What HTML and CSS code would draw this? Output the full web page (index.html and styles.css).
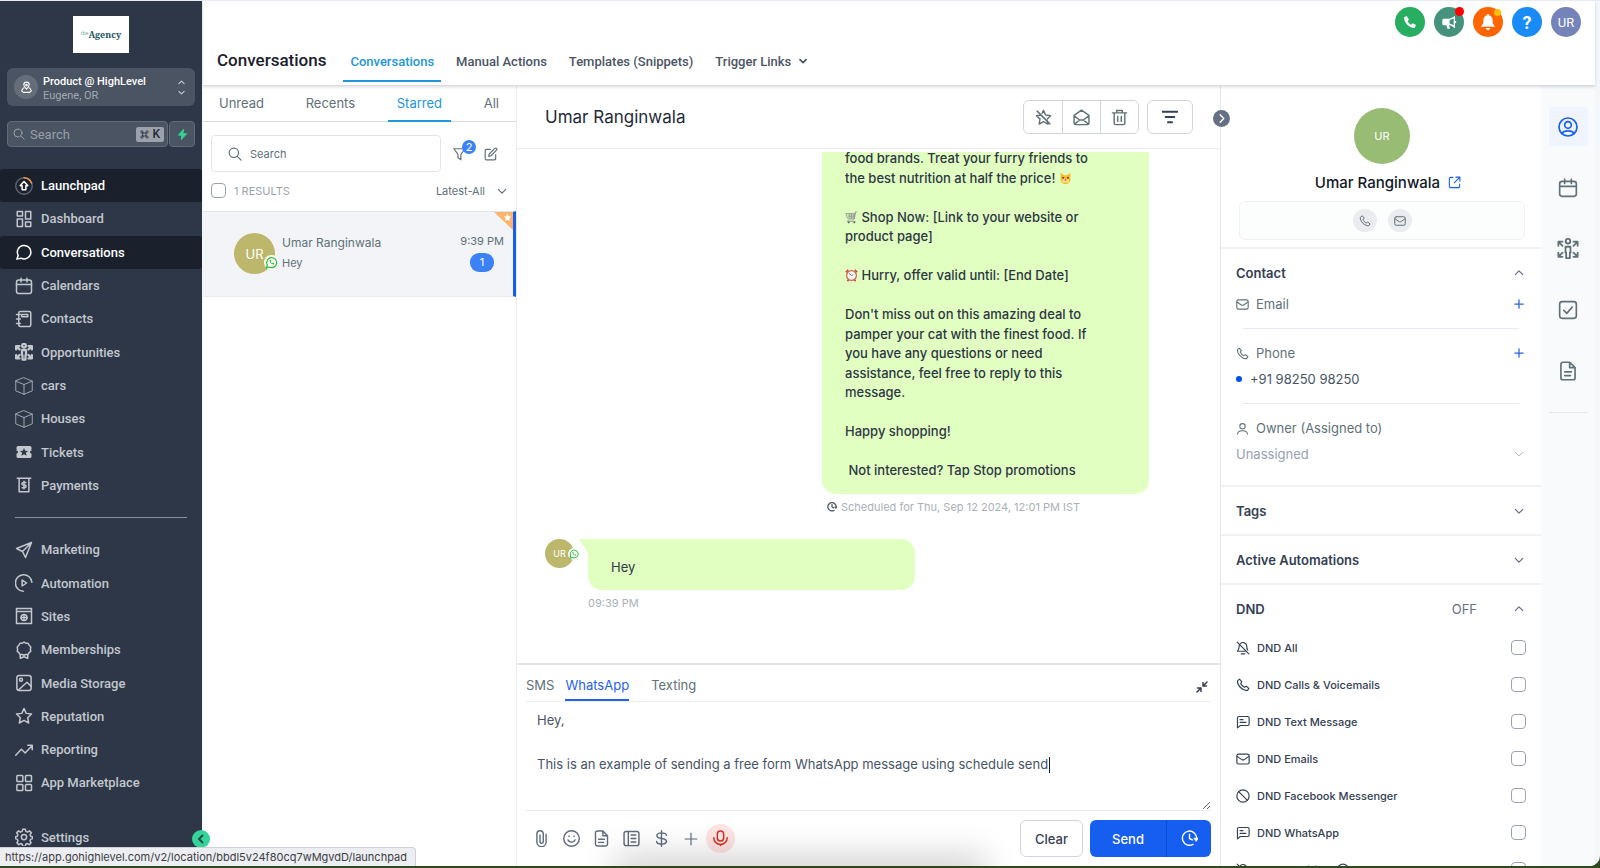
FILE: index.html
```
<!DOCTYPE html>
<html lang="en">
<head>
    <meta charset="UTF-8">
    <title>Conversations</title>
    <link rel="stylesheet" href="styles.css">
</head>
<body>
<svg class="sprite" aria-hidden="true">
    <symbol id="i-pin" viewBox="0 0 24 24"><path d="M12 15c3-3 5-5.500 5-8a5 5 0 0 0-10 0c0 2.500 2 5 5 8z"/><circle cx="12" cy="7.500" r="1.500"/><path d="M7 13H6l-3 5 3 3h12l3-3-3-5h-1"/></symbol>
    <symbol id="i-search" viewBox="0 0 24 24"><circle cx="10" cy="10" r="8"/><path d="m16 16 6.500 6.500"/></symbol>
    <symbol id="i-bolt" viewBox="0 0 24 24"><path d="M14 1 3 13.500h7.500L9.500 23 21 10.500h-7.500z"/></symbol>
    <symbol id="i-up" viewBox="0 0 24 24"><path d="m3 16 9-9 9 9"/></symbol>
    <symbol id="i-down" viewBox="0 0 24 24"><path d="m3 8 9 9 9-9"/></symbol>
    <symbol id="i-left" viewBox="0 0 24 24"><path d="m15 5-7 7 7 7"/></symbol>
    <symbol id="i-right" viewBox="0 0 24 24"><path d="m9 4 8 8-8 8"/></symbol>
    <symbol id="i-launch" viewBox="0 0 24 24"><circle cx="12" cy="12" r="11" stroke="#5b6472"/><path d="M12 1a11 11 0 0 1 10 7" stroke="#f2994a"/><path d="m12 6 5 5.500h-2.500V17h-5v-5.500H7z"/></symbol>
    <symbol id="i-dash" viewBox="0 0 24 24"><path d="M3 2h7v6H3zM14 2h7v10h-7zM3 12h7v10H3zM14 16h7v6h-7z"/></symbol>
    <symbol id="i-chat" viewBox="0 0 24 24"><path d="M2.500 21.500 4.300 16.600A9 9 0 1 1 8 20.200z"/></symbol>
    <symbol id="i-cal" viewBox="0 0 24 24"><rect x="2" y="4" width="20" height="18" rx="3"/><path d="M2 10h20M8 1.500v5M16 1.500v5"/></symbol>
    <symbol id="i-book" viewBox="0 0 24 24"><rect x="5" y="2" width="16" height="20" rx="2"/><path d="M9 6h8v3H9zM2 6h5M2 12h5M2 18h5"/></symbol>
    <symbol id="i-opp" viewBox="0 0 24 24"><circle cx="12" cy="3.500" r="2.500"/><path d="M9.300 9.500h5.400v6.500H14v6h-4v-6h-.700zM1.500 8.500V4H6M2 4.500l4 4M22.500 8.500V4H18M22 4.500l-4 4M1.500 16v4.500H6M2 20l4-4M22.500 16v4.500H18M22 20l-4-4"/></symbol>
    <symbol id="i-box" viewBox="0 0 24 24"><path d="M12 1 23 5.500v13L12 23 1 18.500v-13zM1 5.500 12 10l11-4.500M12 10v13"/></symbol>
    <symbol id="i-ticket" viewBox="0 0 24 24"><path fill="currentColor" stroke="none" fill-rule="evenodd" d="M4 4h16a2 2 0 0 1 2 2v4a2 2 0 0 0 0 4v4a2 2 0 0 1-2 2H4a2 2 0 0 1-2-2v-4a2 2 0 0 0 0-4V6a2 2 0 0 1 2-2zm8 2.500-1.500 3.700-4 .3 3 2.600-.900 3.900 3.400-2.100 3.400 2.100-.900-3.900 3-2.600-4-.3z"/></symbol>
    <symbol id="i-pay" viewBox="0 0 24 24"><path d="M3 3h18M5.500 3v18h13V3M14.500 8.500h-3.500a1.700 1.700 0 0 0 0 3.500h2a1.700 1.700 0 0 1 0 3.500H9.500M12 7v10"/></symbol>
    <symbol id="i-send" viewBox="0 0 24 24"><path d="M22 2 2 10l8 4 4 8zM22 2 10 14"/></symbol>
    <symbol id="i-auto" viewBox="0 0 24 24"><path d="M11 23A11 11 0 1 1 22.500 11M9.500 8v8l6-4z"/></symbol>
    <symbol id="i-site" viewBox="0 0 24 24"><path d="M2 2h20v20H2zM2 6h20"/><circle cx="12" cy="14" r="4"/><path d="M8 14h8M12 10v8"/></symbol>
    <symbol id="i-badge" viewBox="0 0 24 24"><path d="m12 1.500 2.500 1.400 2.900.1 1.400 2.500L21 8l-.400 2.800.400 2.800-2.200 1.900L17.400 18h-2.900L12 19l-2.500-1H6.600l-1.400-2.500L3 13.600l.400-2.800L3 8l2.200-2.500L6.600 3l2.900-.1zM7 18v5l5-2 5 2v-5"/></symbol>
    <symbol id="i-image" viewBox="0 0 24 24"><rect x="2.500" y="2" width="19" height="20" rx="3"/><circle cx="8" cy="7.500" r="2"/><path d="m5 21 11-10 5.500 5.500"/></symbol>
    <symbol id="i-star" viewBox="0 0 24 24"><path d="m12 2 3 6.500 7 .900-5.100 4.900 1.300 7L12 17.900l-6.200 3.400 1.300-7L2 9.400l7-.900z"/></symbol>
    <symbol id="i-trend" viewBox="0 0 24 24"><path d="m1 19 7.500-8 5 5L23 6M17 5.500h6v6"/></symbol>
    <symbol id="i-grid" viewBox="0 0 24 24"><rect x="2.500" y="2" width="8" height="8" rx="1"/><rect x="14" y="2" width="8" height="8" rx="1"/><rect x="2.500" y="14" width="8" height="8" rx="1"/><rect x="14" y="14" width="8" height="8" rx="1"/></symbol>
    <symbol id="i-gear" viewBox="0 0 24 24"><circle cx="12" cy="12" r="3.500"/><path d="M10.200 1.500h3.600l.6 3 2.300 1 2.600-1.700 2.500 2.500-1.700 2.600 1 2.300 2.400.6v2.400l-2.700 1-.8 2 1.500 2.500-2.500 2.500-2.500-1.500-2.200.9-.7 2.900h-3.200l-.7-2.900-2.200-.9-2.500 1.500-2.500-2.500 1.500-2.500-.8-2-2.700-1v-2.400l2.400-.6 1-2.300-1.700-2.600 2.500-2.500 2.600 1.700 2.300-1z"/></symbol>
    <symbol id="i-funnel" viewBox="0 0 24 24"><path d="M1.500 3h19l-7 9.500V22l-5-3.500v-6z"/></symbol>
    <symbol id="i-edit" viewBox="0 0 24 24"><path d="M11 4H4a2 2 0 0 0-2 2v14a2 2 0 0 0 2 2h14a2 2 0 0 0 2-2v-7M18.500 2.500a2.100 2.100 0 0 1 3 3L12 15l-4 1 1-4z"/></symbol>
    <symbol id="i-wa" viewBox="0 0 24 24"><circle cx="12" cy="12" r="12" fill="#fff" stroke="none"/><path d="M4 20.500 5.300 16A8 8 0 1 1 8.500 19.200z" stroke="#25c22b" stroke-width="2"/><path d="M9 8c-1 3.500 3.500 8 7 7l.3-1.700-2.300-1-1 1c-1.200-.5-2-1.300-2.500-2.500l1-1-.9-2.200z" fill="#25c22b" stroke="none"/></symbol>
    <symbol id="i-unstar" viewBox="0 0 24 24"><path d="m8.500 8.500-6.500.9 5.100 4.900-1.300 7L12 17.900l6.200 3.400-1-5.300M10 6l2-4 3 6.500 7 .9-4.500 4.300M3 3l18 18"/></symbol>
    <symbol id="i-open" viewBox="0 0 24 24"><path d="M1.500 9 12 1.500 22.500 9v11a2 2 0 0 1-2 2h-17a2 2 0 0 1-2-2zM2 10l7.500 5.500h5L22 10M2.500 21l7-5.500M21.500 21l-7-5.500"/></symbol>
    <symbol id="i-trash" viewBox="0 0 24 24"><path d="M2 5.500h20M8 5V2h8v3M4.500 6v14a2 2 0 0 0 2 2h11a2 2 0 0 0 2-2V6M9.500 10.500v7M14.500 10.500v7"/></symbol>
    <symbol id="i-lines" viewBox="0 0 24 24"><path d="M1 4h22M5.500 12h13M9 20h6"/></symbol>
    <symbol id="i-later" viewBox="0 0 24 24"><path d="M17 20.200A10 10 0 1 1 22 12M12 6v6l4 2"/><path d="M18.500 11.500h6L21.500 16z" fill="currentColor" stroke-width="1"/></symbol>
    <symbol id="i-shrink" viewBox="0 0 24 24"><path d="M22 2 14.500 9.500M14 3v7h7M2 22l7.500-7.500M10 21v-7H3"/></symbol>
    <symbol id="i-clip" viewBox="0 0 24 24"><path d="M18.500 6v11a6.500 6.500 0 0 1-13 0V5.500a4.500 4.500 0 0 1 9 0v11a2.300 2.300 0 0 1-4.600 0V7"/></symbol>
    <symbol id="i-smile" viewBox="0 0 24 24"><circle cx="12" cy="12" r="11"/><path d="M7 14a5.500 5.500 0 0 0 10 0M8.500 8.500v.8M15.500 8.500v.8"/></symbol>
    <symbol id="i-doc" viewBox="0 0 24 24"><path d="M14 1.500H6A2.500 2.500 0 0 0 3.500 4v16A2.500 2.500 0 0 0 6 22.500h12a2.500 2.500 0 0 0 2.500-2.500V8zM14 1.500V8h6.500M8 13h8M8 17.500h7"/></symbol>
    <symbol id="i-page" viewBox="0 0 24 24"><rect x="1.500" y="2" width="21" height="20" rx="3"/><path d="M7.500 2v20M11.500 7h6.500M11.500 12h6.500M11.500 17h6.500"/></symbol>
    <symbol id="i-dollar" viewBox="0 0 24 24"><path d="M12 1v22M19 7.500C18.500 5 15.500 4 12 4 8 4 5.500 5.500 5.500 8s2.500 3.500 6.500 4 7 1.500 7 4-3 4-7 4-7-1.500-7-4"/></symbol>
    <symbol id="i-plus" viewBox="0 0 24 24"><path d="M12 2v20M2 12h20"/></symbol>
    <symbol id="i-mic" viewBox="0 0 24 24"><rect x="7.500" y="1.500" width="9" height="14" rx="4.500"/><path d="M2.500 11a9.500 9.500 0 0 0 19 0M12 20.500V22"/></symbol>
    <symbol id="i-phone" viewBox="0 0 24 24"><path d="M6 2 2.500 5C2 12.500 11 22 19.500 21.500l2.500-3.500-4.500-4-3 2c-3-1.200-5.500-4-6.500-6.500l2-3z"/></symbol>
    <symbol id="i-mail" viewBox="0 0 24 24"><rect x="1.500" y="3.500" width="21" height="17" rx="3"/><path d="m2 7.500 8.500 6h3L22 7.500"/></symbol>
    <symbol id="i-user" viewBox="0 0 24 24"><circle cx="12" cy="8" r="5"/><path d="M3 22c0-4.500 3.500-6 9-6s9 1.500 9 6"/></symbol>
    <symbol id="i-ext" viewBox="0 0 24 24"><path d="M9 2.500H5A2.500 2.500 0 0 0 2.500 5v14A2.500 2.500 0 0 0 5 21.500h14a2.500 2.500 0 0 0 2.500-2.500v-4M14.500 2h7.500v7.500M22 2 11.500 12.500"/></symbol>
    <symbol id="i-profile" viewBox="0 0 24 24"><circle cx="12" cy="12" r="10.800"/><circle cx="12" cy="9.500" r="4"/><path d="M5 20c1-2.500 3-3.300 7-3.300s6 .8 7 3.300"/></symbol>
    <symbol id="i-check" viewBox="0 0 24 24"><rect x="2" y="2" width="20" height="20" rx="3"/><path d="m7 12.500 3.500 3.500L17 8.500"/></symbol>
    <symbol id="i-belloff" viewBox="0 0 24 24"><path d="M7.500 4.500A6.500 6.500 0 0 1 18.500 9c0 3 .5 5 1.500 6.500M5.500 8c0 4-.5 6.500-3 9.500H17M9 22h6M2 2l20 20"/></symbol>
    <symbol id="i-msg" viewBox="0 0 24 24"><path d="M5 2.500h15A2.500 2.500 0 0 1 22.500 5v10.500A2.500 2.500 0 0 1 20 18H7.500L2.500 22V5A2.500 2.500 0 0 1 5 2.500zM7 8h5M7 12.500h10"/></symbol>
    <symbol id="i-ban" viewBox="0 0 24 24"><circle cx="12" cy="12" r="10.500"/><path d="m4.500 4.500 15 15"/></symbol>
    <symbol id="i-info" viewBox="0 0 24 24"><circle cx="12" cy="12" r="10"/><path d="M12 11v6M12 7v1"/></symbol>
</svg>
<div class="app">
    <aside class="sidebar">
        <a href="#" class="logo"><small>the</small>Agency</a>
        <button class="location">
            <span class="pin"><svg class="icon"><use href="#i-pin"/></svg></span>
            <span class="place"><b>Product @ HighLevel</b><span>Eugene, OR</span></span>
            <span class="updown"><svg class="icon"><use href="#i-up"/></svg><svg class="icon"><use href="#i-down"/></svg></span>
        </button>
        <div class="quick">
            <label class="quick-search">
                <svg class="icon"><use href="#i-search"/></svg>
                <input type="text" placeholder="Search" aria-label="Search the app">
                <kbd><svg class="icon" viewBox="0 0 24 24"><path d="M8 8h8v8H8zM8 8V5a3 3 0 1 0-3 3zM16 8h3a3 3 0 1 0-3-3zM8 16H5a3 3 0 1 0 3 3zM16 16v3a3 3 0 1 0 3-3z"/></svg>K</kbd>
            </label>
            <button class="bolt" aria-label="Quick actions"><svg class="icon"><use href="#i-bolt"/></svg></button>
        </div>
        <nav class="menu">
            <a href="#" class="active"><svg class="icon"><use href="#i-launch"/></svg>Launchpad</a>
            <a href="#"><svg class="icon"><use href="#i-dash"/></svg>Dashboard</a>
            <a href="#" class="active"><svg class="icon"><use href="#i-chat"/></svg>Conversations</a>
            <a href="#"><svg class="icon"><use href="#i-cal"/></svg>Calendars</a>
            <a href="#"><svg class="icon"><use href="#i-book"/></svg>Contacts</a>
            <a href="#"><svg class="icon heavy"><use href="#i-opp"/></svg>Opportunities</a>
            <a href="#"><svg class="icon thin"><use href="#i-box"/></svg>cars</a>
            <a href="#"><svg class="icon thin"><use href="#i-box"/></svg>Houses</a>
            <a href="#"><svg class="icon"><use href="#i-ticket"/></svg>Tickets</a>
            <a href="#"><svg class="icon"><use href="#i-pay"/></svg>Payments</a>
            <hr>
            <a href="#"><svg class="icon"><use href="#i-send"/></svg>Marketing</a>
            <a href="#"><svg class="icon"><use href="#i-auto"/></svg>Automation</a>
            <a href="#"><svg class="icon"><use href="#i-site"/></svg>Sites</a>
            <a href="#"><svg class="icon"><use href="#i-badge"/></svg>Memberships</a>
            <a href="#"><svg class="icon"><use href="#i-image"/></svg>Media Storage</a>
            <a href="#"><svg class="icon"><use href="#i-star"/></svg>Reputation</a>
            <a href="#"><svg class="icon"><use href="#i-trend"/></svg>Reporting</a>
            <a href="#"><svg class="icon"><use href="#i-grid"/></svg>App Marketplace</a>
            <a href="#" class="settings"><svg class="icon"><use href="#i-gear"/></svg>Settings</a>
        </nav>
        <button class="collapse" aria-label="Collapse menu"><svg class="icon"><use href="#i-left"/></svg></button>
    </aside>

    <div class="page">
        <header class="topbar">
            <div class="shortcuts">
                <button class="round call" aria-label="Call"><svg viewBox="0 0 24 24"><path d="M7 3 3 5c0 8.500 7.500 16 16 16l2-4.500-5-2.500-2 2c-2.500-1-4.500-3-5.500-5.500L10.500 8.500z"/></svg></button>
                <button class="round news" aria-label="News"><svg viewBox="0 0 24 24"><path fill-rule="evenodd" d="M2 9a2 2 0 0 1 2-2h7c4 0 7-2 9-4h1v7a2 2 0 0 1 0 4v7h-1c-2-2-5-4-8-4l1.500 5H9.500L8 17H4a2 2 0 0 1-2-2zm11 0v5.500c2 .3 4 1.200 6 2.500V6.500c-2 1.300-4 2.200-6 2.500z"/></svg><i></i></button>
                <button class="round alerts" aria-label="Notifications"><svg viewBox="0 0 24 24"><path d="M12 0c-1 0-1.500.7-1.500 2C6.500 3 5 6 5 10c0 4-1 6-3.500 9h21C20 16 19 14 19 10c0-4-1.500-7-5.500-8 0-1.300-.5-2-1.500-2zM9 21a3 3 0 0 0 6 0z"/></svg><i></i></button>
                <button class="round help">?</button>
                <button class="round me">UR</button>
            </div>
            <div class="titles">
                <h1>Conversations</h1>
                <nav>
                    <a href="#" class="active">Conversations</a>
                    <a href="#">Manual Actions</a>
                    <a href="#">Templates (Snippets)</a>
                    <a href="#">Trigger Links <svg class="icon heavy"><use href="#i-down"/></svg></a>
                </nav>
            </div>
        </header>

        <div class="columns">
            <section class="inbox">
                <nav class="inbox-tabs">
                    <a href="#">Unread</a>
                    <a href="#">Recents</a>
                    <a href="#" class="active">Starred</a>
                    <a href="#">All</a>
                </nav>
                <div class="inbox-search">
                    <label class="field"><svg class="icon"><use href="#i-search"/></svg><input type="text" placeholder="Search" aria-label="Search conversations"></label>
                    <button class="funnel" aria-label="Filters"><svg class="icon"><use href="#i-funnel"/></svg><span class="count">2</span></button>
                    <button aria-label="New message"><svg class="icon"><use href="#i-edit"/></svg></button>
                </div>
                <div class="results">
                    <label><input type="checkbox">1 RESULTS</label>
                    <button>Latest-All <svg class="icon heavy"><use href="#i-down"/></svg></button>
                </div>
                <a href="#" class="thread">
                    <span class="avatar">UR<svg class="icon wa"><use href="#i-wa"/></svg></span>
                    <span class="who"><span>Umar Ranginwala</span><small>Hey</small></span>
                    <span class="when">9:39 PM<b>1</b></span>
                    <span class="flag"><svg viewBox="0 0 24 24"><use href="#i-star"/></svg></span>
                </a>
            </section>

            <main class="chat">
                <div class="chat-head">
                    <h2>Umar Ranginwala</h2>
                    <div class="group">
                        <button aria-label="Unstar"><svg class="icon"><use href="#i-unstar"/></svg></button>
                        <button aria-label="Mark as unread"><svg class="icon"><use href="#i-open"/></svg></button>
                        <button aria-label="Delete"><svg class="icon"><use href="#i-trash"/></svg></button>
                    </div>
                    <button class="filter" aria-label="Filter messages"><svg class="icon"><use href="#i-lines"/></svg></button>
                </div>
                <div class="messages">
                    <div class="outgoing">
                        <div class="bubble">
                            <p>food brands. Treat your furry friends to the best nutrition at half the price! <svg class="emoji" viewBox="0 0 16 16"><path fill="#f9b824" d="M2 1l4 3h4l4-3v8c0 4-3 6-6 6s-6-2-6-6z"/><path fill="#fde68a" d="M4 9h8v4H4z"/><path fill="#4a3413" d="M4 6h2v2H4zM10 6h2v2h-2z"/><path fill="#e0559a" d="M7 9h2v2H7z"/></svg></p>
                            <p><svg class="emoji" viewBox="0 0 16 16"><path fill="none" stroke="#8d978f" d="M15 1h-2l-2 10H4M1 3l2 6h8.500l1-6zM3 5h9M3.500 7h8M5 3l1 6M8 3v6M11 3l-1 6M4 11l-1 2h10"/><circle cx="4.500" cy="14" r="1.200" fill="#58616a"/><circle cx="11.500" cy="14" r="1.200" fill="#58616a"/></svg> Shop Now: [Link to your website or product page]</p>
                            <p><svg class="emoji" viewBox="0 0 16 16"><path stroke="#c9463a" stroke-width="2" d="m3 15 2-3M13 15l-2-3M1 4l3-3M15 4l-3-3"/><circle cx="8" cy="8" r="6" fill="#f4f4f4" stroke="#d8604f" stroke-width="1.500"/><path fill="none" stroke="#555" d="M5 5.500 8 8l2-1"/></svg> Hurry, offer valid until: [End Date]</p>
                            <p>Don't miss out on this amazing deal to pamper your cat with the finest food. If you have any questions or need assistance, feel free to reply to this message.</p>
                            <p>Happy shopping!</p>
                            <p>&nbsp;Not interested? Tap Stop promotions</p>
                        </div>
                        <div class="stamp"><svg class="icon"><use href="#i-later"/></svg>Scheduled for Thu, Sep 12 2024, 12:01 PM IST</div>
                    </div>
                    <div class="incoming">
                        <span class="avatar small">UR<svg class="icon wa"><use href="#i-wa"/></svg></span>
                        <div>
                            <div class="bubble">Hey</div>
                            <div class="stamp">09:39 PM</div>
                        </div>
                    </div>
                </div>
                <form class="composer">
                    <div class="channels">
                        <a href="#">SMS</a>
                        <a href="#" class="active">WhatsApp</a>
                        <a href="#">Texting</a>
                        <button type="button" aria-label="Minimise"><svg class="icon"><use href="#i-shrink"/></svg></button>
                    </div>
                    <div class="draft">
                        <textarea aria-label="Message" spellcheck="false">Hey,

This is an example of sending a free form WhatsApp message using schedule send</textarea>
                        <span class="caret"></span>
                    </div>
                    <div class="tools">
                        <button type="button" aria-label="Attach file"><svg class="icon"><use href="#i-clip"/></svg></button>
                        <button type="button" aria-label="Emoji"><svg class="icon"><use href="#i-smile"/></svg></button>
                        <button type="button" aria-label="Snippets"><svg class="icon"><use href="#i-doc"/></svg></button>
                        <button type="button" aria-label="Templates"><svg class="icon"><use href="#i-page"/></svg></button>
                        <button type="button" aria-label="Request payment"><svg class="icon"><use href="#i-dollar"/></svg></button>
                        <button type="button" aria-label="More"><svg class="icon small-plus"><use href="#i-plus"/></svg></button>
                        <button type="button" class="mic" aria-label="Record"><svg class="icon"><use href="#i-mic"/></svg></button>
                        <span class="actions">
                            <button type="button" class="clear">Clear</button>
                            <span class="split"><button class="send">Send</button><button type="button" class="schedule" aria-label="Schedule"><svg class="icon"><use href="#i-later"/></svg></button></span>
                        </span>
                    </div>
                </form>
            </main>

            <section class="details">
                <button class="toggle" aria-label="Hide details"><svg class="icon heavy"><use href="#i-right"/></svg></button>
                <div class="profile">
                    <span class="avatar big">UR</span>
                    <h3>Umar Ranginwala <a href="#" aria-label="Open contact"><svg class="icon"><use href="#i-ext"/></svg></a></h3>
                    <div class="reach">
                        <button aria-label="Call contact"><svg class="icon"><use href="#i-phone"/></svg></button>
                        <button aria-label="Email contact"><svg class="icon"><use href="#i-mail"/></svg></button>
                    </div>
                </div>
                <div class="block">
                    <h4>Contact <svg class="icon"><use href="#i-up"/></svg></h4>
                    <div class="line"><svg class="icon"><use href="#i-mail"/></svg>Email<button aria-label="Add email"><svg class="icon"><use href="#i-plus"/></svg></button></div>
                    <hr>
                    <div class="line"><svg class="icon"><use href="#i-phone"/></svg>Phone<button aria-label="Add phone"><svg class="icon"><use href="#i-plus"/></svg></button></div>
                    <div class="number">+91 98250 98250</div>
                    <hr>
                    <div class="line"><svg class="icon"><use href="#i-user"/></svg>Owner (Assigned to)</div>
                    <div class="owner">
                        <select aria-label="Owner"><option>Unassigned</option></select>
                        <svg class="icon"><use href="#i-down"/></svg>
                    </div>
                </div>
                <div class="block"><h4>Tags <svg class="icon"><use href="#i-down"/></svg></h4></div>
                <div class="block"><h4>Active Automations <svg class="icon"><use href="#i-down"/></svg></h4></div>
                <div class="block">
                    <h4>DND <span class="state">OFF</span><svg class="icon"><use href="#i-up"/></svg></h4>
                    <label class="dnd"><svg class="icon"><use href="#i-belloff"/></svg>DND All<input type="checkbox"></label>
                    <label class="dnd"><svg class="icon"><use href="#i-phone"/></svg>DND Calls &amp; Voicemails<input type="checkbox"></label>
                    <label class="dnd"><svg class="icon"><use href="#i-msg"/></svg>DND Text Message<input type="checkbox"></label>
                    <label class="dnd"><svg class="icon"><use href="#i-mail"/></svg>DND Emails<input type="checkbox"></label>
                    <label class="dnd"><svg class="icon"><use href="#i-ban"/></svg>DND Facebook Messenger<input type="checkbox"></label>
                    <label class="dnd"><svg class="icon"><use href="#i-msg"/></svg>DND WhatsApp<input type="checkbox"></label>
                    <label class="dnd"><svg class="icon"><use href="#i-belloff"/></svg>DND Inquiries<svg class="icon"><use href="#i-info"/></svg><input type="checkbox"></label>
                </div>
            </section>

            <nav class="rail">
                <a href="#" class="active" aria-label="Contact"><svg class="icon"><use href="#i-profile"/></svg></a>
                <a href="#" aria-label="Appointments"><svg class="icon"><use href="#i-cal"/></svg></a>
                <a href="#" aria-label="Opportunities"><svg class="icon wide"><use href="#i-opp"/></svg></a>
                <a href="#" aria-label="Tasks"><svg class="icon"><use href="#i-check"/></svg></a>
                <a href="#" aria-label="Notes"><svg class="icon"><use href="#i-doc"/></svg></a>
                <hr>
            </nav>
        </div>
    </div>
    <div class="status">https://app.gohighlevel.com/v2/location/bbdl5v24f80cq7wMgvdD/launchpad</div>
</div>
</body>
</html>
```

FILE: styles.css
```
* {
    box-sizing: border-box;
}
body {
    margin: 0;
    height: 100vh;
    padding-bottom: 2px;
    background: #2c4a1d;
    font-family: Inter, sans-serif;
    font-size: 13px;
    color: #607179;
    overflow: hidden;
}
h1, h2, h3, h4, p {
    margin: 0;
    font-weight: 500;
}
a {
    color: inherit;
    text-decoration: none;
}
button, input, select, textarea {
    font: inherit;
    color: inherit;
    margin: 0;
    padding: 0;
    border: 0;
    background: none;
}
input, textarea, select {
    min-width: 0;
    outline: none;
}
input::placeholder {
    color: inherit;
    opacity: 1;
}
hr {
    border: 0;
    margin: 0;
}
.sprite {
    position: absolute;
    width: 0;
    height: 0;
}
.icon {
    width: 16px;
    height: 16px;
    flex: none;
    fill: none;
    stroke: currentColor;
    stroke-width: 2;
    stroke-linecap: round;
    stroke-linejoin: round;
    overflow: visible;
}
.heavy { stroke-width: 3; }
.thin { stroke-width: 1; }

.app {
    position: relative;
    display: flex;
    height: 100%;
    background: #f3f7fa;
    border-top: 1px solid #e9ebf2;
    border-bottom-right-radius: 10px;
    overflow: hidden;
}
/* soft shadow coming up from the dock */
.app::after {
    content: "";
    position: absolute;
    z-index: 1;
    left: 39%;
    right: 39%;
    bottom: -10px;
    height: 10px;
    box-shadow: 0 0 34px 10px rgba(0, 0, 0, 0.2);
    pointer-events: none;
}

/* sidebar */
.sidebar {
    position: relative;
    z-index: 2;
    flex: none;
    width: 202px;
    display: flex;
    flex-direction: column;
    padding: 15px 0 12px;
    background: #2d3748;
    font-family: Roboto, sans-serif;
    color: #c3c7ce;
}
.logo {
    align-self: center;
    width: 56px;
    height: 37px;
    background: #fff;
    color: #1c5560;
    font: bold 9px/35px "Noto Serif", "Liberation Serif", serif;
    text-align: center;
}
.logo small {
    font-size: 5px;
    font-weight: normal;
    vertical-align: 3px;
    color: #57a89d;
}
.location {
    display: flex;
    align-items: center;
    gap: 5px;
    height: 38px;
    margin: 15px 7px 0;
    padding: 0 7px;
    border-radius: 6px;
    background: #4a5462;
    text-align: left;
}
.pin {
    display: flex;
    width: 24px;
    height: 24px;
    border-radius: 50%;
    background: #666d7a;
    color: #fff;
    align-items: center;
    justify-content: center;
}
.pin .icon {
    width: 13px;
    height: 13px;
}
.place {
    flex: 1;
    padding-top: 3px;
    font-size: 11px;
    line-height: 14px;
    color: #a4a9b1;
}
.place b {
    display: block;
    font-weight: 500;
    color: #fff;
}
.updown {
    display: flex;
    flex-direction: column;
    gap: 3px;
}
.updown .icon {
    width: 7px;
    height: 7px;
    margin-right: 3px;
    stroke-width: 4;
}
.quick {
    display: flex;
    gap: 1px;
    margin: 15px 7px 22px;
}
.quick-search, .bolt {
    display: flex;
    align-items: center;
    height: 26px;
    border: 1px solid #626b78;
    border-radius: 4px;
    background: #4a5462;
}
.quick-search {
    flex: 1;
    gap: 5px;
    padding: 0 3px 0 5px;
    color: #989fa9;
}
.quick-search .icon {
    width: 12px;
    height: 12px;
}
.quick-search input {
    flex: 1;
    width: 50px;
}
kbd {
    display: flex;
    align-items: center;
    gap: 3px;
    height: 15px;
    padding: 0 4px;
    border-radius: 2px;
    background: #9ca1ac;
    color: #1f2733;
    font: 500 12px Roboto, sans-serif;
}
.quick-search kbd .icon {
    width: 9px;
    height: 9px;
}
.bolt {
    width: 26px;
    justify-content: center;
    color: #34d399;
}
.bolt .icon {
    width: 11px;
    height: 11px;
    fill: currentColor;
}
.menu {
    flex: 1;
    display: flex;
    flex-direction: column;
}
.menu a {
    flex: 1;
    display: flex;
    align-items: center;
    gap: 8px;
    padding-left: 15px;
    border-radius: 3px;
    font-weight: 500;
}
.menu a.active {
    background: #1a202c;
    color: #fff;
}
.menu .icon {
    width: 18px;
    height: 18px;
}
.menu hr {
    height: 1px;
    margin: 15px;
    background: #8791a0;
}
.menu .settings {
    margin-top: 21px;
}
.collapse {
    position: absolute;
    right: -8px;
    bottom: 18px;
    display: flex;
    align-items: center;
    justify-content: center;
    width: 18px;
    height: 18px;
    border-radius: 50%;
    background: #34d399;
    color: #1f4d42;
}
.collapse .icon {
    width: 12px;
    height: 12px;
    stroke-width: 4;
}

/* header */
.page {
    flex: 1;
    min-width: 0;
    display: flex;
    flex-direction: column;
    margin: 0 5px 0 1px;
}
.topbar {
    position: relative;
    z-index: 1;
    height: 85px;
    background: #fff;
    border-bottom: 1px solid #d9dde2;
    box-shadow: 0 1px 3px rgba(0, 0, 0, 0.15);
    font-family: Roboto, sans-serif;
}
.shortcuts {
    display: flex;
    justify-content: flex-end;
    gap: 9px;
    padding: 6px 14px 0 0;
}
.round {
    position: relative;
    width: 30px;
    height: 30px;
    border-radius: 50%;
    color: #fff;
    display: flex;
    align-items: center;
    justify-content: center;
}
.round svg {
    width: 16px;
    height: 16px;
    fill: currentColor;
}
.round i {
    position: absolute;
    top: 0;
    right: 0;
    width: 9px;
    height: 9px;
    border-radius: 50%;
    background: #f00;
}
.call { background: #27ae60; }
.news { background: #45937c; }
.alerts { background: #ff6500; }
.alerts i { top: 2px; right: 2px; width: 7px; height: 7px; background: #ffbc00; }
.help { background: #188bf6; font-size: 18px; font-weight: 700; }
.me { background: #7583bb; }
.titles {
    display: flex;
    align-items: flex-end;
    height: 45px;
    padding-left: 14px;
}
h1 {
    font-size: 17px;
    line-height: 44px;
    color: #1a202c;
}
.titles nav {
    display: flex;
    gap: 8px;
    height: 44px;
    margin-left: 17px;
}
.titles nav a {
    display: flex;
    align-items: center;
    gap: 8px;
    padding: 4px 7px 0;
    border-bottom: 2px solid transparent;
    font-weight: 500;
    color: #4b5563;
}
.titles nav .active, .inbox-tabs .active {
    color: #2196db;
    border-bottom-color: #2196db;
}
.titles .icon {
    width: 8px;
    height: 8px;
    stroke-width: 5;
}

/* conversation list */
.columns {
    flex: 1;
    min-height: 0;
    display: flex;
    background: #fff;
}
.inbox {
    flex: none;
    width: 314px;
    border-right: 1px solid #e7eaee;
}
.inbox-tabs {
    display: flex;
    justify-content: space-between;
    height: 36px;
    padding: 0 8px 0 7px;
    border-bottom: 1px solid #d5dae0;
}
.inbox-tabs a {
    display: flex;
    align-items: center;
    height: 36px;
    padding: 0 9px;
    border-bottom: 2px solid transparent;
}
.inbox-search {
    display: flex;
    align-items: center;
    gap: 12px;
    padding: 13px 18px 0 8px;
}
.inbox-search .field {
    flex: 1;
    min-width: 0;
    display: flex;
    align-items: center;
    gap: 8px;
    height: 37px;
    padding: 0 16px;
    border: 1px solid #e2e6eb;
    border-radius: 4px;
    font-size: 11px;
}
.inbox-search .field input {
    flex: 1;
}
.inbox-search button {
    position: relative;
    display: flex;
}
.inbox-search .funnel {
    margin-right: 5px;
}
.inbox-search .icon {
    width: 14px;
    height: 14px;
}
.count {
    position: absolute;
    top: -7px;
    right: -9px;
    width: 14px;
    height: 14px;
    border-radius: 50%;
    background: #3b82f6;
    color: #fff;
    font-size: 11px;
    line-height: 14px;
}
input[type="checkbox"] {
    appearance: none;
    flex: none;
    width: 15px;
    height: 15px;
    border: 1px solid #9ba3b3;
    border-radius: 4px;
    background: #fff;
}
.results {
    display: flex;
    align-items: center;
    justify-content: space-between;
    height: 39px;
    padding: 0 9px 2px 8px;
    font-size: 11px;
}
.results label, .results button {
    display: flex;
    align-items: center;
    gap: 8px;
}
.results label { color: #9aa3ad; }
.results button { gap: 12px; }
.results .icon { width: 10px; height: 10px; }
.thread {
    position: relative;
    display: flex;
    height: 86px;
    padding: 21px 9px 0 31px;
    border-top: 1px solid #e3e6ea;
    border-bottom: 1px solid #e9ebef;
    border-right: 3px solid #155eef;
    background: #f2f4f7;
}
.avatar {
    position: relative;
    flex: none;
    display: flex;
    align-items: center;
    justify-content: center;
    width: 41px;
    height: 41px;
    border-radius: 50%;
    background: #bdb76b;
    color: #fff;
}
.wa {
    position: absolute;
    right: -4px;
    bottom: 4px;
    width: 15px;
    height: 15px;
}
.who {
    flex: 1;
    padding-left: 7px;
    font-size: 12px;
    line-height: 20px;
}
.who small {
    display: block;
    font-size: 11px;
}
.when {
    font-size: 11px;
    line-height: 17px;
    text-align: right;
}
.when b {
    display: block;
    width: 24px;
    margin: 3px 10px 0 auto;
    border-radius: 9px;
    background: #3b82f6;
    color: #fff;
    font-weight: 400;
    line-height: 19px;
    text-align: center;
}
.flag {
    position: absolute;
    top: 0;
    right: 0;
    width: 19px;
    height: 18px;
    background: #fdb56c;
    clip-path: polygon(0 0, 100% 0, 100% 100%);
}
.flag svg {
    position: absolute;
    top: 1px;
    right: 1px;
    width: 9px;
    height: 9px;
    fill: #fff;
}

/* chat */
.chat {
    flex: 1;
    min-width: 0;
    display: flex;
    flex-direction: column;
}
.chat-head {
    flex: none;
    display: flex;
    align-items: center;
    gap: 8px;
    height: 63px;
    padding: 0 27px 0 28px;
    border-bottom: 1px solid #e7eaee;
}
.chat-head h2 {
    flex: 1;
    font-size: 17px;
    font-weight: 400;
    color: #1f2937;
}
.group, .filter {
    display: flex;
    height: 34px;
    border: 1px solid #d0d5dd;
    border-radius: 6px;
    align-items: center;
    justify-content: center;
}
.filter {
    width: 46px;
    color: #344054;
}
.group button {
    display: flex;
    align-items: center;
    justify-content: center;
    width: 38px;
    height: 32px;
}
.group button + button {
    border-left: 1px solid #d0d5dd;
}
.group .icon {
    width: 17px;
    height: 17px;
}
.filter .icon {
    stroke-width: 3;
}
.messages {
    flex: 1;
    min-height: 0;
    display: flex;
    flex-direction: column;
    justify-content: flex-end;
    margin-top: 3px;
    padding: 0 71px 47px 28px;
    overflow: hidden;
}
.bubble {
    width: 327px;
    padding: 19px 23px 13px;
    border-radius: 14px;
    background: #e2ffc2;
    line-height: 1.5;
    color: #2d3643;
}
.bubble p + p {
    margin-top: 1.5em;
}
.outgoing {
    align-self: flex-end;
}
.outgoing .bubble {
    padding-top: 0;
    padding-right: 60px;
    border-radius: 0 0 14px 14px;
}
.emoji {
    width: 13px;
    height: 13px;
    vertical-align: -2px;
}
.stamp {
    display: flex;
    align-items: center;
    gap: 4px;
    height: 26px;
    font-size: 11px;
    color: #a9b1ba;
}
.outgoing .stamp {
    padding-left: 5px;
}
.stamp .icon {
    width: 10px;
    height: 10px;
    stroke-width: 3;
    color: #475467;
}
.incoming {
    display: flex;
    gap: 14px;
    margin-top: 19px;
}
.avatar.small {
    width: 29px;
    height: 29px;
    font-size: 9px;
}
.small .wa {
    right: -6px;
    bottom: 8px;
    width: 12px;
    height: 12px;
}
.incoming .bubble {
    position: relative;
    border-top-left-radius: 0;
}
.incoming .bubble::before {
    content: "";
    position: absolute;
    top: 0;
    left: -9px;
    border-top: 14px solid #e2ffc2;
    border-left: 9px solid transparent;
}

/* composer */
.composer {
    flex: none;
    padding: 0 9px 9px;
    border-top: 2px solid #e3e5e8;
}
.channels {
    display: flex;
    align-items: flex-end;
    gap: 11px;
    height: 37px;
    border-bottom: 1px solid #eceef2;
}
.channels a {
    line-height: 28px;
    border-bottom: 2px solid transparent;
}
.channels a + a + a {
    margin-left: 11px;
}
.channels .active {
    color: #2563eb;
    border-color: #2563eb;
}
.channels button {
    margin: 0 3px 5px auto;
    color: #344054;
}
.channels .icon {
    width: 12px;
    height: 12px;
    stroke-width: 3;
}
.draft {
    position: relative;
    border-bottom: 1px solid #e7eaee;
}
.draft textarea {
    display: block;
    width: 100%;
    height: 108px;
    padding: 7px 11px;
    line-height: 22px;
    color: #475467;
    resize: vertical;
}
.caret {
    position: absolute;
    top: 55px;
    left: 523px;
    width: 1px;
    height: 16px;
    background: #111827;
}
.tools {
    display: flex;
    align-items: center;
    padding-top: 9px;
    color: #5d6b82;
}
.tools > button {
    display: flex;
    align-items: center;
    justify-content: center;
    width: 30px;
    height: 29px;
    border-radius: 50%;
}
.tools .icon {
    width: 17px;
    height: 17px;
}
.tools .small-plus {
    width: 14px;
    height: 14px;
}
.tools > .mic {
    width: 29px;
    background: #fee4e2;
    color: #d92d20;
}
.actions {
    display: flex;
    gap: 7px;
    margin-left: auto;
    font-weight: 500;
}
.actions button {
    height: 37px;
}
.clear {
    width: 63px;
    border: 1px solid #d0d5dd;
    border-radius: 6px;
    background: #fff;
    color: #344054;
}
.split {
    display: flex;
    border-radius: 6px;
    background: #155eef;
    color: #fff;
}
.send {
    width: 76px;
}
.schedule {
    display: flex;
    align-items: center;
    justify-content: center;
    width: 45px;
    border-left: 1px solid #0b4bd0;
}

/* contact details */
.details {
    position: relative;
    flex: none;
    width: 321px;
    border-left: 1px solid #e3e6ec;
}
.toggle {
    position: absolute;
    top: 24px;
    left: -8px;
    display: flex;
    align-items: center;
    justify-content: center;
    width: 17px;
    height: 17px;
    border-radius: 50%;
    background: #667085;
    color: #fff;
}
.toggle .icon {
    width: 11px;
    height: 11px;
}
.profile {
    display: flex;
    flex-direction: column;
    align-items: center;
    padding: 22px 16px 7px 18px;
}
.big {
    width: 56px;
    height: 56px;
    background: #99bc74;
    font-size: 11px;
}
h3 {
    display: flex;
    align-items: center;
    gap: 8px;
    height: 37px;
    margin-left: 12px;
    font-size: 15px;
    color: #101828;
}
h3 a {
    display: flex;
    color: #155eef;
}
h3 .icon {
    width: 13px;
    height: 13px;
}
.reach {
    display: flex;
    align-self: stretch;
    align-items: center;
    justify-content: center;
    gap: 11px;
    height: 39px;
    border: 1px solid #f0f2f5;
    border-radius: 6px;
    background: #fcfdfd;
}
.reach button {
    display: flex;
    align-items: center;
    justify-content: center;
    width: 24px;
    height: 23px;
    border-radius: 50%;
    background: #eaecf0;
}
.reach .icon {
    width: 12px;
    height: 12px;
}
.block {
    padding: 0 15px;
    border-top: 2px solid #f0f2f5;
}
h4 {
    display: flex;
    align-items: center;
    justify-content: space-between;
    height: 47px;
    font-size: 13px;
    font-weight: 600;
    color: #344054;
}
h4 .icon, .owner .icon {
    width: 10px;
    height: 10px;
    margin-right: 2px;
    stroke-width: 3;
    color: #667085;
}
.state {
    margin: 0 37px 0 auto;
    font-weight: 400;
    color: #667085;
}
.line {
    display: flex;
    align-items: center;
    gap: 7px;
    height: 16px;
}
.line .icon {
    width: 13px;
    height: 13px;
}
.line button {
    display: flex;
    margin-left: auto;
    color: #2563eb;
}
.line button .icon {
    width: 10px;
    height: 10px;
    margin-right: 2px;
    stroke-width: 3;
}
.block hr {
    height: 1px;
    margin: 16px 7px;
    background: #e7eaee;
}
.number {
    display: flex;
    align-items: center;
    gap: 8px;
    height: 36px;
    margin-bottom: -10px;
    color: #475467;
}
.number::before {
    content: "";
    width: 6px;
    height: 6px;
    border-radius: 50%;
    background: #004eeb;
}
.owner {
    display: flex;
    align-items: center;
    height: 35px;
    margin-bottom: 14px;
    color: #98a2b3;
}
.owner select {
    appearance: none;
    flex: 1;
}
.owner .icon {
    stroke-width: 2;
    color: #98a2b3;
}
.dnd {
    display: flex;
    align-items: center;
    gap: 7px;
    height: 37px;
    font-size: 11px;
    font-weight: 500;
    color: #344054;
}
h4 + .dnd {
    margin-top: -3px;
}
.dnd .icon {
    width: 14px;
    height: 14px;
}
.dnd input {
    margin-left: auto;
}

/* right rail */
.rail {
    flex: none;
    width: 54px;
    display: flex;
    flex-direction: column;
    align-items: center;
    gap: 22px;
    padding-top: 21px;
    background: #f9fafb;
}
.rail a {
    display: flex;
    align-items: center;
    justify-content: center;
    width: 39px;
    height: 39px;
    border-radius: 4px;
}
.rail a.active {
    background: #eff4ff;
    color: #155eef;
}
.rail .icon {
    width: 20px;
    height: 20px;
}
.rail .wide {
    width: 22px;
    height: 22px;
}
.rail hr {
    width: 39px;
    height: 1px;
    background: #e4e7ec;
}

.status {
    position: absolute;
    z-index: 3;
    left: 0;
    bottom: 0;
    height: 19px;
    padding: 0 8px 0 5px;
    border: solid #cfd1d6;
    border-width: 1px 1px 0 0;
    border-top-right-radius: 4px;
    background: #edeef2;
    color: #3c4043;
    font-size: 11px;
    line-height: 19px;
}
```
